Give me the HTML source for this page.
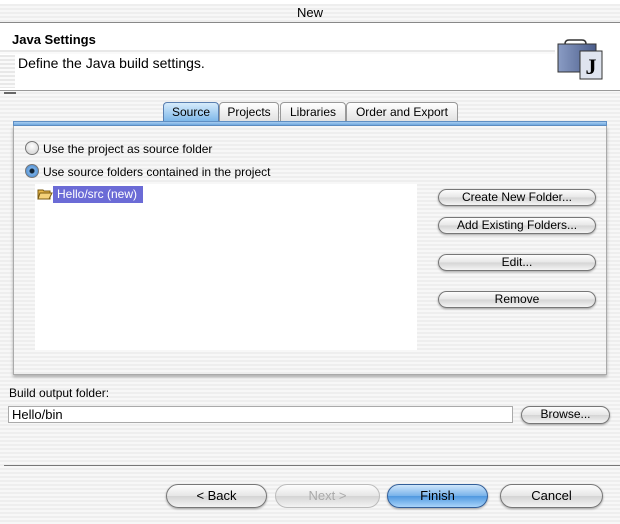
<!DOCTYPE html>
<html><head><style>
*{margin:0;padding:0;box-sizing:border-box}
body{width:620px;height:524px;overflow:hidden;position:relative;font-family:"Liberation Sans",sans-serif;font-size:12px;color:#000;
background:repeating-linear-gradient(#eeeeee 0 2px,#f7f7f7 2px 4px);}
.a{position:absolute}
.btn{position:absolute;border:1px solid #777;border-radius:9px;background:linear-gradient(#fdfdfd,#e6e6e6 50%,#d4d4d4 51%,#f4f4f4);text-align:center;font-size:12px;line-height:15px;box-shadow:0 1px 2px rgba(0,0,0,.35)}
.big{border-radius:12px;font-size:13px;line-height:21px}
.tab{position:absolute;top:102px;height:19px;border:1px solid #999;border-bottom:none;border-radius:4px 4px 0 0;background:linear-gradient(#fff,#e2e2e2);text-align:center;line-height:18px;font-size:12px}
.radio{position:absolute;width:14px;height:14px;border-radius:50%;border:1px solid #777;background:radial-gradient(circle at 50% 35%,#fff,#ccc)}
</style></head><body>
<div class="a" style="left:0;top:0;width:620px;height:4px;background:#fff"></div>
<div class="a" style="left:0;top:22px;width:620px;height:1px;background:#888"></div>
<div class="a" style="left:0;top:5px;width:620px;text-align:center;font-size:13px">New</div>
<div class="a" style="left:0;top:23px;width:620px;height:67px;background:#fff"></div>
<div class="a" style="left:0;top:50px;width:555px;height:4px;background:repeating-linear-gradient(#e8e8e8 0 2px,#fafafa 2px 4px)"></div>
<div class="a" style="left:0;top:55px;width:15px;height:33px;background:repeating-linear-gradient(#e8e8e8 0 2px,#fafafa 2px 4px)"></div>
<div class="a" style="left:12px;top:32px;font-weight:bold;font-size:13px">Java Settings</div>
<div class="a" style="left:18px;top:55px;font-size:14px">Define the Java build settings.</div>
<div class="a" style="left:0;top:90px;width:620px;height:1px;background:#999"></div>
<div class="a" style="left:4px;top:92px;width:12px;height:2px;background:#666"></div>
<svg class="a" style="left:556px;top:38px" width="48" height="42">
<defs><linearGradient id="g" x1="0" x2="1"><stop offset="0" stop-color="#8a9cc4"/><stop offset="1" stop-color="#4a5c8a"/></linearGradient></defs>
<path d="M9 6 Q9 2 13 2 L26 2 Q30 2 30 6" fill="none" stroke="#333" stroke-width="1.5"/>
<rect x="2" y="6" width="38" height="28" fill="url(#g)" stroke="#333"/>
<rect x="24" y="13" width="22" height="28" fill="#dfe4ef" stroke="#333"/>
<text x="35" y="36" text-anchor="middle" font-family="Liberation Serif,serif" font-weight="bold" font-size="22">J</text>
</svg>
<div class="tab" style="left:163px;width:56px;background:linear-gradient(#d6ebfb,#7fb8ea);border-color:#5a7fb0">Source</div>
<div class="tab" style="left:219px;width:60px">Projects</div>
<div class="tab" style="left:280px;width:66px">Libraries</div>
<div class="tab" style="left:346px;width:112px">Order and Export</div>
<div class="a" style="left:13px;top:121px;width:594px;height:5px;background:linear-gradient(#a9cdf0,#6fa9e0);border:1px solid #5f8fc4"></div>
<div class="a" style="left:13px;top:126px;width:594px;height:249px;border:1px solid #aaa;border-top:none;box-shadow:0 2px 3px rgba(0,0,0,.3)"></div>
<div class="radio" style="left:25px;top:141px"></div>
<div class="a" style="left:43px;top:142px">Use the project as source folder</div>
<div class="radio" style="left:25px;top:164px;background:radial-gradient(circle,#123 0 2px,#7ab0e6 3px,#3d7fc8)"></div>
<div class="a" style="left:43px;top:165px">Use source folders contained in the project</div>
<div class="a" style="left:35px;top:184px;width:382px;height:166px;background:#fff"></div>
<svg class="a" style="left:37px;top:187px" width="16" height="14"><path d="M1 3h5l1 1h6v8H1z" fill="#e8b84a" stroke="#7a5a10"/><path d="M3 6h12l-3 6H1z" fill="#f4d27a" stroke="#7a5a10"/></svg>
<div class="a" style="left:53px;top:186px;width:90px;height:17px;background:#6b6bd6;color:#fff;line-height:17px;padding-left:4px">Hello/src (new)</div>
<div class="btn" style="left:438px;top:189px;width:158px;height:17px">Create New Folder...</div>
<div class="btn" style="left:438px;top:217px;width:158px;height:17px">Add Existing Folders...</div>
<div class="btn" style="left:438px;top:254px;width:158px;height:17px">Edit...</div>
<div class="btn" style="left:438px;top:291px;width:158px;height:17px">Remove</div>
<div class="a" style="left:9px;top:386px">Build output folder:</div>
<div class="a" style="left:8px;top:406px;width:505px;height:17px;background:#fff;border:1px solid #aaa;font-size:13px;line-height:16px;padding-left:3px">Hello/bin</div>
<div class="btn" style="left:521px;top:406px;width:89px;height:18px">Browse...</div>
<div class="a" style="left:4px;top:465px;width:616px;height:1px;background:#777"></div>
<div class="btn big" style="left:166px;top:484px;width:101px;height:24px">&lt; Back</div>
<div class="btn big" style="left:275px;top:484px;width:105px;height:24px;color:#aaa;border-color:#bbb;box-shadow:none">Next &gt;</div>
<div class="btn big" style="left:387px;top:484px;width:101px;height:24px;border-color:#335f99;background:linear-gradient(#cfe6fb,#77b2ea 50%,#4f98e0 51%,#a8d4fa)">Finish</div>
<div class="btn big" style="left:500px;top:484px;width:103px;height:24px">Cancel</div>
</body></html>
